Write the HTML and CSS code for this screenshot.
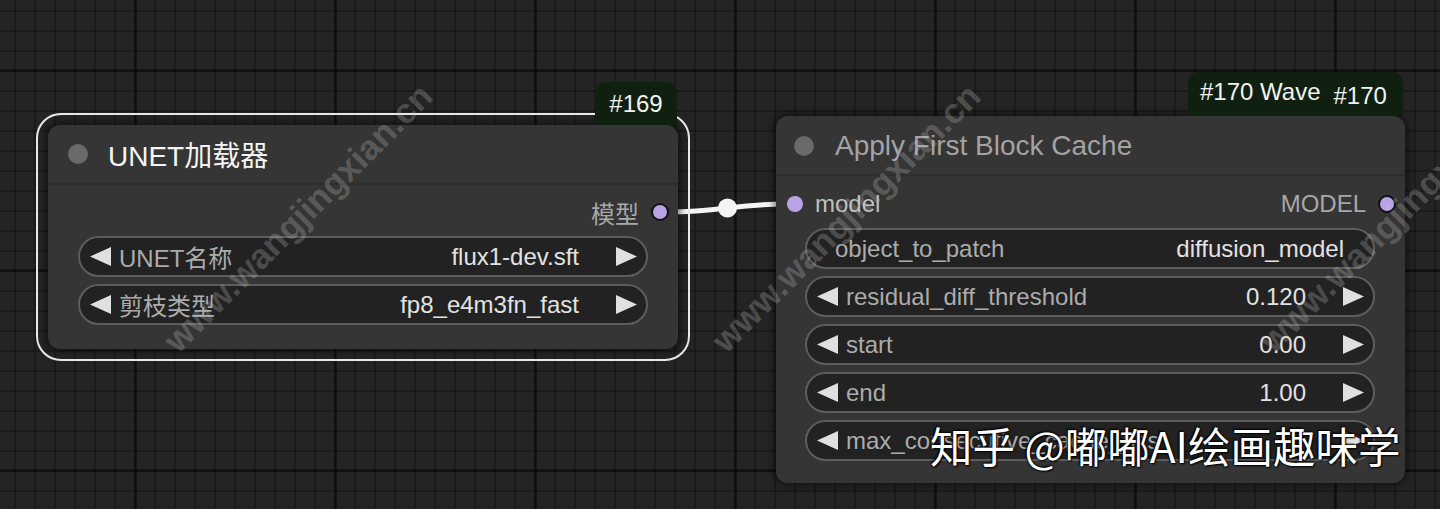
FILE: index.html
```html
<!DOCTYPE html>
<html lang="zh">
<head>
<meta charset="utf-8">
<title>ComfyUI nodes</title>
<link rel="stylesheet" href="styles.css">
</head>
<body>
<div class="canvas">
  <svg class="links" width="1440" height="509" viewBox="0 0 1440 509">
    <path d="M669 212 C720 212 735 204 787 204" class="link"/>
    <circle cx="727.5" cy="208" r="9.5" class="link-dot"/>
  </svg>

  <div class="node node-unet selected">
    <div class="badge badge-169"><span>#169</span></div>
    <div class="title"><span class="title-dot"></span><span class="title-text">UNET加载器</span></div>
    <div class="body">
      <div class="slots">
        <span class="slot out"><span class="slot-label">模型</span><span class="slot-dot ring"></span></span>
      </div>
      <div class="widgets">
        <div class="widget"><span class="arrow left"></span><span class="label">UNET名称</span><span class="value">flux1-dev.sft</span><span class="arrow right"></span></div>
        <div class="widget"><span class="arrow left"></span><span class="label">剪枝类型</span><span class="value">fp8_e4m3fn_fast</span><span class="arrow right"></span></div>
      </div>
    </div>
  </div>

  <div class="node node-cache">
    <div class="badge badge-170"><span class="b1">#170 Wave</span><span class="b2">#170</span></div>
    <div class="title"><span class="title-dot"></span><span class="title-text dim">Apply First Block Cache</span></div>
    <div class="body">
      <div class="slots">
        <span class="slot in"><span class="slot-dot"></span><span class="slot-label light">model</span></span>
        <span class="slot out"><span class="slot-label">MODEL</span><span class="slot-dot ring"></span></span>
      </div>
      <div class="widgets">
        <div class="widget plain"><span class="label">object_to_patch</span><span class="value">diffusion_model</span></div>
        <div class="widget"><span class="arrow left"></span><span class="label">residual_diff_threshold</span><span class="value">0.120</span><span class="arrow right"></span></div>
        <div class="widget"><span class="arrow left"></span><span class="label">start</span><span class="value">0.00</span><span class="arrow right"></span></div>
        <div class="widget"><span class="arrow left"></span><span class="label">end</span><span class="value">1.00</span><span class="arrow right"></span></div>
        <div class="widget"><span class="arrow left"></span><span class="label">max_consecutive_cache_hits</span><span class="value"></span><span class="arrow right"></span></div>
      </div>
    </div>
  </div>

  <span class="wm wm1">www.wangjingxian.cn</span>
  <span class="wm wm2">www.wangjingxian.cn</span>
  <span class="wm wm3">www.wangjingxian.cn</span>

  <div class="zhihu">知乎 @嘟嘟AI绘画趣味学</div>
</div>
</body>
</html>
```

FILE: styles.css
```css
html, body {
  margin: 0;
  padding: 0;
  background: #222;
}

.canvas {
  position: relative;
  width: 1440px;
  height: 509px;
  overflow: hidden;
  font-family: "Liberation Sans", Arial, "Noto Sans CJK SC", sans-serif;
  background-color: #242424;
  background-image:
    linear-gradient(90deg, rgba(0,0,0,0.4) 3px, transparent 3px),
    linear-gradient(0deg, rgba(0,0,0,0.4) 3px, transparent 3px),
    linear-gradient(90deg, rgba(0,0,0,0.25) 2px, transparent 2px),
    linear-gradient(0deg, rgba(0,0,0,0.25) 2px, transparent 2px);
  background-size: 200px 100%, 100% 200px, 20px 100%, 100% 20px;
  background-position: 134px 0, 0 72px, 14px 0, 0 12px;
}

.links {
  position: absolute;
  left: 0;
  top: 0;
}
.link {
  fill: none;
  stroke: #f4f4f4;
  stroke-width: 5;
}
.link-dot {
  fill: #f4f4f4;
}

/* nodes */
.node {
  position: absolute;
  background: #353535;
  border-radius: 12px;
  box-shadow: 0 0 6px 3px rgba(0,0,0,0.45);
  display: flex;
  flex-direction: column;
  color: #aaa;
  font-size: 24px;
}
.node-unet {
  left: 48px;
  top: 125px;
  width: 630px;
  height: 224px;
}
.node-cache {
  left: 776px;
  top: 116px;
  width: 629px;
  height: 367px;
}

.node.selected::before {
  content: "";
  position: absolute;
  left: -12px;
  top: -12px;
  right: -12px;
  bottom: -12px;
  border: 2px solid #e8e8e8;
  border-radius: 25px;
  pointer-events: none;
}

.badge {
  position: absolute;
  bottom: 100%;
  background: #102010;
  border-radius: 11px 11px 0 0;
  color: #f2f2f2;
  font-size: 24px;
  display: flex;
  align-items: center;
  z-index: 2;
}
.badge-169 {
  right: 1px;
  width: 82px;
  height: 43px;
  justify-content: center;
  padding-top: 1px;
  box-sizing: border-box;
}
.badge-170 {
  right: 2px;
  width: 215px;
  height: 44px;
  padding-left: 12px;
  box-sizing: border-box;
  gap: 13px;
}
.badge-170 .b1 {
  margin-top: -4px;
}
.badge-170 .b2 {
  margin-top: 4px;
}

.title {
  height: 60px;
  flex: none;
  display: flex;
  align-items: center;
  padding-left: 20px;
  border-bottom: 2px solid #2d2d2d;
  box-sizing: border-box;
}
.node-cache .title {
  padding-left: 18px;
  padding-top: 2px;
}
.title-dot {
  width: 20px;
  height: 20px;
  border-radius: 50%;
  background: #6a6a6a;
  flex: none;
}
.title-text {
  margin-left: 20px;
  font-size: 28px;
  color: #f4f4f4;
}
.title-text.dim {
  margin-left: 21px;
  color: #a3a3a3;
}

.body {
  display: flex;
  flex-direction: column;
  padding: 11px 30px 0 30px;
}
.node-cache .body {
  padding: 12px 30px 0 29px;
}

.slots {
  height: 32px;
  display: flex;
  align-items: center;
  justify-content: flex-end;
  margin: 0 -21px 8px -18px;
}
.node-cache .slots {
  justify-content: space-between;
}
.slot {
  display: flex;
  align-items: center;
  gap: 12px;
}
.slot-label {
  color: #a8a8a8;
}
.slot-label.light {
  color: #c0c0c0;
}
.slot-dot {
  width: 16px;
  height: 16px;
  border-radius: 50%;
  background: #b8a4e4;
  box-sizing: border-box;
}
.slot-dot.ring {
  border: 2px solid #111;
  width: 18px;
  height: 18px;
}

.widgets {
  display: flex;
  flex-direction: column;
  gap: 7px;
}
.widget {
  height: 41px;
  box-sizing: border-box;
  border: 2px solid #5d5d5d;
  border-radius: 21px;
  background: #222;
  display: flex;
  align-items: center;
  padding: 0 9px 0 10px;
  white-space: nowrap;
  overflow: hidden;
}
.widget.plain {
  padding: 0 29px 0 28px;
}
.label {
  color: #acacac;
  margin-left: 8px;
}
.widget.plain .label {
  margin-left: 0;
}
.value {
  margin-left: auto;
  color: #e2e2e2;
}
.arrow {
  width: 21px;
  height: 19px;
  background: #e0e0e0;
  flex: none;
}
.arrow.left {
  clip-path: polygon(0 50%, 100% 0, 100% 100%);
}
.arrow.right {
  margin-left: 37px;
  clip-path: polygon(0 0, 100% 50%, 0 100%);
}

/* watermark overlays */
.wm {
  position: absolute;
  top: 218px;
  font-family: "Liberation Sans", Arial, sans-serif;
  font-weight: bold;
  font-size: 35px;
  color: rgba(200,200,200,0.27);
  white-space: nowrap;
  transform: translate(-50%, -50%) rotate(-45deg);
  z-index: 5;
  pointer-events: none;
}
.wm1 { left: 298px; }
.wm2 { left: 846px; }
.wm3 { left: 1394px; }

.zhihu {
  position: absolute;
  left: 930px;
  top: 416px;
  font-family: "Noto Sans CJK SC", "Liberation Sans", sans-serif;
  font-size: 42.5px;
  line-height: 58px;
  color: #fff;
  text-shadow: 0 0 2px #000, 1px 1px 2px #000, -1px -1px 2px #000;
  white-space: nowrap;
  z-index: 6;
}
```
